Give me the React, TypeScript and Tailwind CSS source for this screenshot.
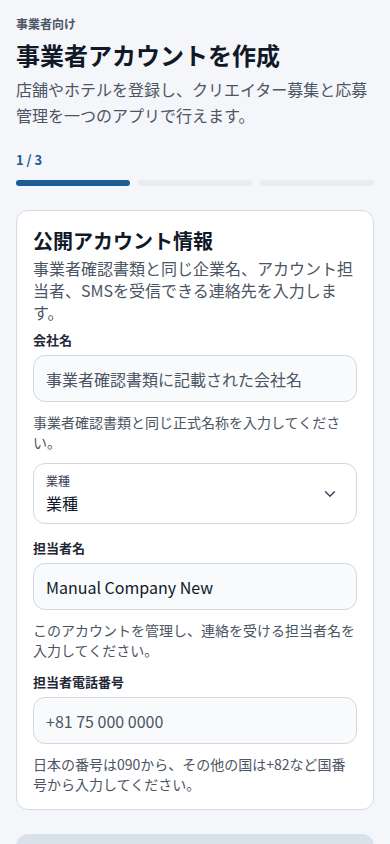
import { ChevronDown } from 'lucide-react';

const font = { fontFamily: '"Noto Sans CJK JP", "Noto Sans", sans-serif' };

function Label({ children }: { children: React.ReactNode }) {
  return <p className="text-[13px] leading-[18px] font-bold text-[#1f2937]">{children}</p>;
}

function Helper({ children }: { children: React.ReactNode }) {
  return <p className="mt-[10px] text-[14px] leading-[20px] text-[#4b5563]">{children}</p>;
}

export default function App() {
  const steps = [true, false, false];

  return (
    <div className="min-h-screen bg-[#f4f6fa] px-4 pt-4 pb-10" style={font}>
      <p className="text-[12px] leading-[16px] font-bold text-[#4b5563]">事業者向け</p>
      <h1 className="mt-[7px] text-[24px] leading-[32px] font-bold text-[#111827]">事業者アカウントを作成</h1>
      <p className="mt-[5px] text-[16px] leading-[26px] text-[#4b5563]">
        店舗やホテルを登録し、クリエイター募集と応募管理を一つのアプリで行えます。
      </p>

      <p className="mt-[23px] text-[13px] leading-[18px] font-bold text-[#1d5b99]">1 / 3</p>
      <div className="mt-[11px] grid grid-cols-3 gap-2">
        {steps.map((on, i) => (
          <div key={i} className={on ? 'h-[6px] rounded-full bg-[#1d5b99]' : 'h-[6px] rounded-full bg-[#e9edf2]'} />
        ))}
      </div>

      <div className="mt-6 rounded-xl border border-[#d3dbe5] bg-white px-4 pt-4 pb-[15px]">
        <h2 className="text-[20px] leading-[28px] font-bold text-[#111827]">公開アカウント情報</h2>
        <p className="mt-[2px] text-[16px] leading-[22px] text-[#4b5563]">
          事業者確認書類と同じ企業名、アカウント担当者、SMSを受信できる連絡先を入力します。
        </p>

        <div className="mt-2 flex flex-col gap-[13px]">
          <div>
            <Label>会社名</Label>
            <input
              className="mt-1.5 block h-[47px] w-full rounded-xl border border-[#cfd8e3] bg-[#f8fafc] px-3 text-[16px] text-[#111827] outline-none placeholder:text-[#4b5563]"
              placeholder="事業者確認書類に記載された会社名"
              style={font}
            />
            <Helper>事業者確認書類と同じ正式名称を入力してください。</Helper>
          </div>

          <div className="-mt-[2px] flex h-[61px] items-center justify-between rounded-xl border border-[#cfd8e3] bg-white pl-3 pr-[17px]">
            <div>
              <p className="text-[12px] leading-[16px] text-[#374151]">業種</p>
              <p className="mt-[3px] text-[16px] leading-[22px] text-[#111827]">業種</p>
            </div>
            <ChevronDown size={18} strokeWidth={1.75} className="text-[#334155]" />
          </div>

          <div className="mt-[2px]">
            <Label>担当者名</Label>
            <input
              className="mt-1.5 block h-[47px] w-full rounded-xl border border-[#cfd8e3] bg-[#f8fafc] px-3 text-[16px] text-[#111827] outline-none"
              defaultValue="Manual Company New"
              style={font}
            />
            <Helper>このアカウントを管理し、連絡を受ける担当者名を入力してください。</Helper>
          </div>

          <div>
            <Label>担当者電話番号</Label>
            <input
              className="mt-1.5 block h-[47px] w-full rounded-xl border border-[#cfd8e3] bg-[#f8fafc] px-3 text-[16px] text-[#111827] outline-none placeholder:text-[#4b5563]"
              placeholder="+81 75 000 0000"
              style={font}
            />
            <Helper>日本の番号は090から、その他の国は+82など国番号から入力してください。</Helper>
          </div>
        </div>
      </div>

      <button
        disabled
        aria-label="次へ"
        className="mt-6 block h-[52px] w-full rounded-xl bg-[#d9e1ea]"
      />
    </div>
  );
}
